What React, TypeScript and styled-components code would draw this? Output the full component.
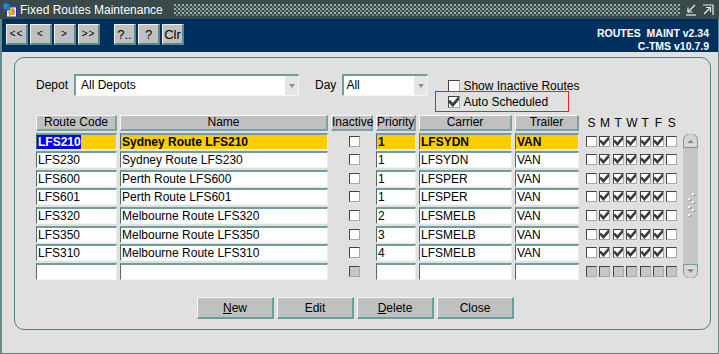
import React from 'react';
import styled, { createGlobalStyle } from 'styled-components';

type Route = {
  code: string;
  name: string;
  priority: string;
  carrier: string;
  trailer: string;
  days: boolean[];
};

const weekdays = [false, true, true, true, true, true, false];

const routes: Route[] = [
  { code: 'LFS210', name: 'Sydney Route LFS210', priority: '1', carrier: 'LFSYDN', trailer: 'VAN', days: weekdays },
  { code: 'LFS230', name: 'Sydney Route LFS230', priority: '1', carrier: 'LFSYDN', trailer: 'VAN', days: weekdays },
  { code: 'LFS600', name: 'Perth Route LFS600', priority: '1', carrier: 'LFSPER', trailer: 'VAN', days: weekdays },
  { code: 'LFS601', name: 'Perth Route LFS601', priority: '1', carrier: 'LFSPER', trailer: 'VAN', days: weekdays },
  { code: 'LFS320', name: 'Melbourne Route LFS320', priority: '2', carrier: 'LFSMELB', trailer: 'VAN', days: weekdays },
  { code: 'LFS350', name: 'Melbourne Route LFS350', priority: '3', carrier: 'LFSMELB', trailer: 'VAN', days: weekdays },
  { code: 'LFS310', name: 'Melbourne Route LFS310', priority: '4', carrier: 'LFSMELB', trailer: 'VAN', days: weekdays },
];

const dayLetters = ['S', 'M', 'T', 'W', 'T', 'F', 'S'];

const App: React.FC = () => {
  return (
    <>
      <GlobalStyle />
      <Window>
        <TitleBar>
          <AppIcon />
          <TitleText>Fixed Routes Maintenance</TitleText>
          <Dots />
          <WindowControls>
            <MinimizeIcon />
            <MaximizeIcon />
          </WindowControls>
        </TitleBar>

        <Frame>
          <Toolbar>
            <ToolGroup>
              <ToolButton $small>&lt;&lt;</ToolButton>
              <ToolButton $small>&lt;</ToolButton>
              <ToolButton $small>&gt;</ToolButton>
              <ToolButton $small>&gt;&gt;</ToolButton>
              <ToolButton $spaced>?..</ToolButton>
              <ToolButton>?</ToolButton>
              <ToolButton>Clr</ToolButton>
            </ToolGroup>
            <VersionInfo>
              {'ROUTES  MAINT v2.34'}
              <br />
              C-TMS v10.7.9
            </VersionInfo>
          </Toolbar>

          <Body>
            <Panel>
              <FilterRow>
                <Field>
                  <FieldLabel>Depot</FieldLabel>
                  <Select $width={225} $pad={5}>
                    <SelectValue>All Depots</SelectValue>
                    <DropArrow />
                  </Select>
                </Field>
                <Field $offset={16}>
                  <FieldLabel>Day</FieldLabel>
                  <Select $width={86} $pad={2}>
                    <SelectValue>All</SelectValue>
                    <DropArrow />
                  </Select>
                </Field>
                <CheckGroup>
                  <CheckRow>
                    <CheckBox $size={12} />
                    <span>Show Inactive Routes</span>
                  </CheckRow>
                  <HighlightedCheckRow>
                    <CheckBox $size={12}>
                      <CheckMark size={10} />
                    </CheckBox>
                    <span>Auto Scheduled</span>
                  </HighlightedCheckRow>
                </CheckGroup>
              </FilterRow>

              <Table>
                <HeaderCell>Route Code</HeaderCell>
                <HeaderCell>Name</HeaderCell>
                <HeaderCell>Inactive</HeaderCell>
                <HeaderCell>Priority</HeaderCell>
                <HeaderCell>Carrier</HeaderCell>
                <HeaderCell>Trailer</HeaderCell>
                <DayHeader>
                  {dayLetters.map((d, i) => (
                    <DayLetter key={i}>{d}</DayLetter>
                  ))}
                </DayHeader>
                <HeaderCorner />
                <ScrollTrack>
                  <ScrollArrow direction="up" />
                  <ScrollGrip />
                  <ScrollArrow direction="down" />
                </ScrollTrack>

                {routes.map((r, idx) => {
                  const selected = idx === 0;
                  return (
                    <React.Fragment key={r.code}>
                      <Cell $selected={selected}>
                        {selected ? <Selection>{r.code}</Selection> : r.code}
                      </Cell>
                      <Cell $selected={selected}>{r.name}</Cell>
                      <CenterCell>
                        <CheckBox $size={11} />
                      </CenterCell>
                      <Cell $selected={selected}>{r.priority}</Cell>
                      <Cell $selected={selected}>{r.carrier}</Cell>
                      <Cell $selected={selected}>{r.trailer}</Cell>
                      <DayBoxes>
                        {r.days.map((on, i) => (
                          <CheckBox key={i} $size={11}>
                            {on && <CheckMark size={9} />}
                          </CheckBox>
                        ))}
                      </DayBoxes>
                    </React.Fragment>
                  );
                })}

                <Cell />
                <Cell />
                <CenterCell>
                  <CheckBox $size={11} $disabled />
                </CenterCell>
                <Cell />
                <Cell />
                <Cell />
                <DayBoxes>
                  {dayLetters.map((_, i) => (
                    <CheckBox key={i} $size={11} $disabled />
                  ))}
                </DayBoxes>
              </Table>

              <ButtonRow>
                <ActionButton>
                  <u>N</u>ew
                </ActionButton>
                <ActionButton>Edit</ActionButton>
                <ActionButton>
                  <u>D</u>elete
                </ActionButton>
                <ActionButton>Close</ActionButton>
              </ButtonRow>
            </Panel>
          </Body>
        </Frame>
      </Window>
    </>
  );
};

const AppIcon = () => (
  <svg width="16" height="16" viewBox="0 0 16 16">
    <rect x="4.5" y="3.5" width="10" height="11.5" fill="#fff" stroke="#1c2f9c" />
    <rect x="4.5" y="3.5" width="10" height="2" fill="#2c48c8" />
    <line x1="7" y1="8" x2="13" y2="8" stroke="#d42020" />
    <line x1="7" y1="10" x2="13" y2="10" stroke="#d42020" />
    <line x1="7" y1="12" x2="13" y2="12" stroke="#d42020" />
    <circle cx="4.5" cy="4.5" r="4" fill="#2f6fd0" stroke="#143a80" strokeWidth="0.6" />
    <path d="M2 3 Q4 2 5 4 Q4 6 2.5 5.5 Z M6 6 Q7.5 5 8 7 Z" fill="#3cae48" />
    <polygon points="10,6 6,11 8.5,11 6,15.5 12,9.5 9.5,9.5 11.5,6" fill="#ffd400" stroke="#9c7c00" strokeWidth="0.5" />
  </svg>
);

const MinimizeIcon = () => (
  <svg width="12" height="12" viewBox="0 0 12 12" fill="none" stroke="#e6eeee" strokeWidth="1.2">
    <path d="M10 1 L3 8" />
    <path d="M3 3.5 V8 H7.5" />
    <path d="M1 11 H11" />
  </svg>
);

const MaximizeIcon = () => (
  <svg width="12" height="12" viewBox="0 0 12 12" fill="none" stroke="#e6eeee" strokeWidth="1.2">
    <path d="M1 1 H11 V11" />
    <path d="M2 10 L8.5 3.5" />
    <path d="M4 3.5 H8.5 V8" />
  </svg>
);

// heavy check drawn inside the box, like the forms runtime does
const CheckMark: React.FC<{ size: number }> = ({ size }) => (
  <svg width={size} height={size} viewBox="0 0 9 9" fill="none">
    <polyline
      points="0.9,4.4 3.4,7.2 8.4,1.4"
      stroke="#354141"
      strokeWidth="2.6"
      strokeLinecap="square"
    />
  </svg>
);

const ScrollArrow: React.FC<{ direction: 'up' | 'down' }> = ({ direction }) => (
  <svg width="15" height="14" viewBox="0 0 15 14">
    {direction === 'up' ? (
      <>
        <path d="M0.5 13.5 V6 A6 5.5 0 0 1 14.5 6 V13.5 Z" fill="#d6d6d6" stroke="#6c9e9e" />
        <polygon points="4,9.5 7.5,5.5 11,9.5" fill="#8a8a8a" />
        <line x1="4" y1="10" x2="11" y2="10" stroke="#f2f2f2" />
      </>
    ) : (
      <>
        <path d="M0.5 0.5 V8 A6 5.5 0 0 0 14.5 8 V0.5 Z" fill="#d6d6d6" stroke="#6c9e9e" />
        <polygon points="4,5 7.5,9 11,5" fill="#8a8a8a" />
        <line x1="4" y1="4.5" x2="11" y2="4.5" stroke="#f2f2f2" />
      </>
    )}
  </svg>
);

const ScrollGrip = () => (
  <svg width="10" height="26" viewBox="0 0 10 26">
    {[
      [6, 0],
      [2, 5],
      [6, 8],
      [2, 13],
      [6, 16],
      [2, 21],
    ].map(([x, y], i) => (
      <g key={i}>
        <rect x={x + 1} y={y + 1} width="2" height="2" fill="#8c9c9c" />
        <rect x={x} y={y} width="2" height="2" fill="#ffffff" />
      </g>
    ))}
  </svg>
);

const GlobalStyle = createGlobalStyle`
  html, body {
    margin: 0;
    padding: 0;
    background: #e0e0e0;
  }
  body {
    font-family: "Liberation Sans", Arial, sans-serif;
    font-size: 12px;
    color: #000;
  }
`;

const Window = styled.div`
  width: 719px;
  height: 354px;
  display: flex;
  flex-direction: column;
  overflow: hidden;
  background: #e0e0e0;
`;

const TitleBar = styled.div`
  height: 19px;
  flex-shrink: 0;
  background: #3a4a4a;
  display: flex;
  align-items: center;
  padding: 0 5px 0 2px;
  color: #fff;
`;

const TitleText = styled.span`
  margin-left: 2px;
  margin-right: 11px;
  font-size: 12px;
  white-space: nowrap;
`;

const Dots = styled.div`
  flex: 1;
  height: 12px;
  background-image: radial-gradient(circle at 1px 1px, #97b0b0 0.9px, transparent 1.2px),
    radial-gradient(circle at 1px 1px, #6f8c8c 0.9px, transparent 1.2px);
  background-size: 4px 4px;
  background-position: 0 0, 2px 2px;
`;

const WindowControls = styled.div`
  display: flex;
  gap: 5px;
  margin-left: 5px;
`;

const Frame = styled.div`
  flex: 1;
  display: flex;
  flex-direction: column;
  border-left: 2px solid #6a8a8a;
  border-right: 1px solid #6a8a8a;
  border-bottom: 1px solid #5e8080;
`;

const Toolbar = styled.div`
  height: 33px;
  flex-shrink: 0;
  box-sizing: border-box;
  background: #00305e;
  display: flex;
  justify-content: space-between;
  align-items: flex-start;
  padding: 5px 9px 0 4px;
`;

const ToolGroup = styled.div`
  display: flex;
  gap: 2px;
`;

const ToolButton = styled.button<{ $small?: boolean; $spaced?: boolean }>`
  width: 22px;
  height: 21px;
  padding: 0;
  margin-left: ${p => (p.$spaced ? '12px' : '0')};
  box-sizing: border-box;
  background: #c0c0c0;
  border-style: solid;
  border-width: 1px 2px 2px 1px;
  border-color: #f2f2f2 #5c8888 #5c8888 #f2f2f2;
  font-family: "Liberation Sans", Arial, sans-serif;
  font-size: ${p => (p.$small ? '10px' : '13px')};
  letter-spacing: ${p => (p.$small ? '1px' : '0')};
  color: #000;
  line-height: 1;
`;

const VersionInfo = styled.div`
  padding-top: 3px;
  color: #fff;
  font-weight: bold;
  font-size: 10.5px;
  line-height: 13px;
  text-align: right;
  white-space: pre;
`;

const Body = styled.div`
  flex: 1;
  padding: 5px 7px 0 12px;
`;

const Panel = styled.div`
  height: 273px;
  box-sizing: border-box;
  border: 1px solid #4e8080;
  border-radius: 10px;
  padding: 16px 0 10px 21px;
  display: flex;
  flex-direction: column;
`;

const FilterRow = styled.div`
  display: flex;
  align-items: flex-start;
  height: 37px;
`;

const Field = styled.div<{ $offset?: number }>`
  display: flex;
  align-items: center;
  gap: 6px;
  height: 22px;
  margin-left: ${p => p.$offset ?? 0}px;
`;

const FieldLabel = styled.span`
  font-size: 12px;
`;

const Select = styled.div<{ $width: number; $pad: number }>`
  width: ${p => p.$width}px;
  height: 22px;
  box-sizing: border-box;
  background: #fff;
  border-top: 2px solid #6e9e9e;
  border-left: 2px solid #6e9e9e;
  border-right: 1px solid #f2f2f2;
  border-bottom: 1px solid #f6f6f6;
  padding-left: ${p => p.$pad}px;
  display: flex;
  align-items: stretch;
`;

const SelectValue = styled.span`
  flex: 1;
  line-height: 19px;
  white-space: nowrap;
`;

const DropArrow = styled.span`
  width: 13px;
  background: #e6e6e6;
  display: flex;
  align-items: center;
  justify-content: center;

  &::after {
    content: '';
    border-left: 3.5px solid transparent;
    border-right: 3.5px solid transparent;
    border-top: 4px solid #8e8e8e;
  }
`;

const CheckGroup = styled.div`
  display: flex;
  flex-direction: column;
  margin-left: 7px;
  padding-top: 6px;
`;

const CheckRow = styled.label`
  display: flex;
  align-items: center;
  gap: 3px;
  height: 12px;
  padding-left: 13px;
  font-size: 12px;
  white-space: nowrap;
`;

const HighlightedCheckRow = styled(CheckRow)`
  width: 134px;
  height: 21px;
  box-sizing: border-box;
  margin-top: -1px;
  padding-left: 12px;
  padding-top: 1px;
  border: 1px solid #e82020;
`;

const CheckBox = styled.span<{ $size: number; $disabled?: boolean }>`
  width: ${p => p.$size}px;
  height: ${p => p.$size}px;
  flex-shrink: 0;
  box-sizing: border-box;
  background: ${p => (p.$disabled ? '#c6c6c6' : '#fff')};
  border: 1px solid;
  border-color: #444 #a8a8a8 #a8a8a8 #444;
  display: flex;
  align-items: center;
  justify-content: center;
`;

const Table = styled.div`
  display: grid;
  grid-template-columns: 81px 208px 42px 40px 93px 64px 96px 17px;
  grid-template-rows: 16px repeat(8, 17px);
  column-gap: 3px;
  row-gap: 1.6px;
  margin-top: 4px;
`;

const HeaderCell = styled.div`
  box-sizing: border-box;
  background: #c0c0c0;
  border-style: solid;
  border-width: 1px 2px 2px 1px;
  border-color: #f6f6f6 #7aa4a4 #7aa4a4 #f6f6f6;
  text-align: center;
  line-height: 13px;
  font-size: 12px;
  white-space: nowrap;
`;

const HeaderCorner = styled.div`
  grid-column: 8;
  grid-row: 1;
`;

const DayHeader = styled.div`
  display: flex;
  gap: 2.4px;
  padding-left: 4px;
  line-height: 16px;
`;

const DayLetter = styled.span`
  width: 11px;
  text-align: center;
  font-size: 12px;
`;

const Cell = styled.div<{ $selected?: boolean }>`
  box-sizing: border-box;
  background: ${p => (p.$selected ? '#ffcc00' : '#fff')};
  font-weight: ${p => (p.$selected ? 'bold' : 'normal')};
  border-top: 2px solid #6e9e9e;
  border-left: 1px solid #4c6c6c;
  border-right: 1px solid #ececec;
  border-bottom: 1px solid #f4f4f4;
  padding-left: 1px;
  line-height: 14px;
  white-space: nowrap;
  overflow: hidden;
`;

const Selection = styled.span`
  display: inline-block;
  margin-left: -1px;
  padding-left: 1px;
  background: #0000f4;
  color: #fff;
`;

const CenterCell = styled.div`
  display: flex;
  align-items: center;
  justify-content: center;
  padding-left: 4px;
`;

const DayBoxes = styled.div`
  display: flex;
  align-items: center;
  gap: 2.4px;
  padding-left: 4px;
`;

const ScrollTrack = styled.div`
  grid-column: 8;
  grid-row: 2 / span 8;
  width: 15px;
  margin: 1px 0 2px 2px;
  background: #c6c6c6;
  border-radius: 7px;
  display: flex;
  flex-direction: column;
  justify-content: space-between;
  align-items: center;
`;

const ButtonRow = styled.div`
  display: flex;
  gap: 3px;
  margin-top: auto;
  padding-left: 161px;
`;

const ActionButton = styled.button`
  width: 77px;
  height: 22px;
  box-sizing: border-box;
  padding: 0;
  background: #c0c0c0;
  border-style: solid;
  border-width: 1px 2px 2px 1px;
  border-color: #f6f6f6 #6e9c9c #6e9c9c #f6f6f6;
  font-family: "Liberation Sans", Arial, sans-serif;
  font-size: 12px;
  color: #000;
`;

export default App;
